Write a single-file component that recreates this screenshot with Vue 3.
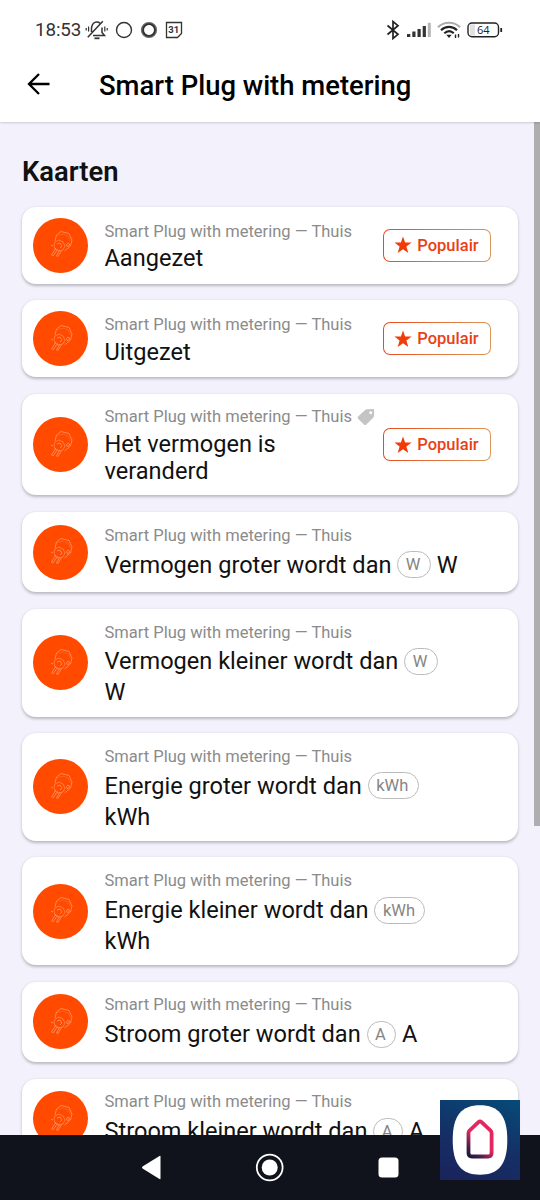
<script setup>
const device = 'Smart Plug with metering — Thuis'
const cards = [
  { title: 'Aangezet', popular: true },
  { title: 'Uitgezet', popular: true },
  { title: 'Het vermogen is veranderd', popular: true, tag: true },
  { title: 'Vermogen groter wordt dan', unit: 'W' },
  { title: 'Vermogen kleiner wordt dan', unit: 'W' },
  { title: 'Energie groter wordt dan', unit: 'kWh' },
  { title: 'Energie kleiner wordt dan', unit: 'kWh' },
  { title: 'Stroom groter wordt dan', unit: 'A' },
  { title: 'Stroom kleiner wordt dan', unit: 'A' },
]
</script>

<template>
  <div class="screen">
    <header class="top">
      <div class="status">
        <span class="clock">18:53</span>
        <svg class="bell" width="23" height="20" viewBox="0 0 23 20" fill="none" stroke="#333" stroke-width="1.5">
          <path d="M8 15.500H19.500L17 12.500V7.500M6.500 12V8C7 4.500 9 2 11.800 2q2 0 3.200 1.200M2.800 17.300 17.800 1.200" />
          <path d="M9.500 18.300h5" stroke-width="1.800" />
          <path d="M3.600 6.500v5M1.200 8v2.500M19.800 6.500v5M22.200 8v2.500" stroke-width="1.200" />
        </svg>
        <svg class="ring" width="18" height="18" viewBox="0 0 18 18" fill="none" stroke="#333">
          <circle cx="9" cy="9" r="7.500" stroke-width="1.400" />
        </svg>
        <svg class="ring" width="18" height="18" viewBox="0 0 18 18" fill="none">
          <circle cx="9" cy="9" r="6.500" stroke="#666" stroke-width="3.200" />
          <circle cx="9" cy="9" r="6" stroke="#2c2c2c" stroke-width="1.400" />
        </svg>
        <svg class="calendar" width="18" height="18" viewBox="0 0 18 18" fill="none" stroke="#333" stroke-width="1.300">
          <path d="M1.500 1.500h15v11l-4 4h-11zM16 13l-3 3" />
          <text x="8.800" y="12.200" text-anchor="middle" font-family="Roboto, sans-serif" font-size="9.500" font-weight="700" fill="#333" stroke="none">31</text>
        </svg>
        <div class="status-right">
          <svg width="14" height="20" viewBox="0 0 14 20" fill="none" stroke="#222" stroke-width="1.700">
            <path d="M1.500 5.500 12 14.300 7 18.500V1.500L12 5.700 1.500 14.500" />
          </svg>
          <svg class="signal" width="26" height="16" viewBox="0 0 26 16">
            <path fill="#333" d="M1 12h3.300v3H1zM6.300 9.500h3.200V15H6.300zM11.500 7h3.200v8h-3.200zM16.700 4h3.200v11h-3.200z" />
            <path fill="#b5b5b5" d="M21.800 .8h3V15h-3z" />
          </svg>
          <svg class="wifi" width="24" height="18" viewBox="0 0 24 18" fill="none" stroke="#222" stroke-width="2.100">
            <path d="M1 6.200C7 .2 17 .2 23 6.200" stroke="#aaa" />
            <path d="M4 9.200c4.500-4.500 11.500-4.500 16 0" />
            <path d="M7.300 12.300c3-2.700 6.700-2.700 9.500 0" />
            <path d="M9.300 13.800h5.400L12 17z" fill="#222" stroke="none" />
            <path d="M18.500 13.500V17M21.500 13v3.500" stroke-width="1.400" />
          </svg>
          <svg class="battery" width="36" height="16" viewBox="0 0 36 16" fill="none" stroke="#222" stroke-width="1.400">
            <rect x="3" y="2.500" width="5" height="11" fill="#e2e2e2" stroke="none" />
            <rect x="1" y="1" width="30.500" height="13.800" rx="4" />
            <path d="M34.200 6v4" stroke-width="1.800" />
            <text x="16.200" y="12" text-anchor="middle" font-family="'Open Sans', sans-serif" font-size="11" font-weight="500" fill="#222" stroke="none">64</text>
          </svg>
        </div>
      </div>
      <div class="bar">
        <svg class="back" width="24" height="24" viewBox="0 0 24 24" fill="none" stroke="#000" stroke-width="2.300">
          <path d="M13 2 3 12l10 10M3 12H23.500" />
        </svg>
        <h1>Smart Plug with metering</h1>
      </div>
    </header>

    <main class="content">
      <div class="list">
        <h2>Kaarten</h2>
        <article v-for="card in cards" :key="card.title" class="card">
          <div class="avatar">
            <svg width="28" height="32" viewBox="0 0 28 32" fill="none" stroke="#ffa57a" stroke-width=".8" stroke-linejoin="round">
              <path d="M8 12 9.500 6l4.500-3.500 8 2 3 6.500-1.500 6-6 5" opacity=".85" />
              <path d="M9.500 6.500 17 5l5 3 1.500 4" opacity=".35" />
              <path d="M8 13l4-2 4 2 2 4-2 4-4 1-4-2-1-4z" opacity=".7" />
              <path d="M10 15l3-1 2 3-2 2M6 17l-2-1M9 19 4.500 26l1.500 1 4.500-6.500M12.500 21 9.500 27l1.500 .5 3.500-6M19.500 15.500l1.500-1.500 1.500 1-.5 2-2 .5z" opacity=".85" />
            </svg>
          </div>
          <div class="body">
            <div class="meta">
              {{ device }}
              <svg v-if="card.tag" class="tag" width="18" height="18" viewBox="0 0 18 18">
                <path fill="#c4c4c4" fill-rule="evenodd" d="M10 1.200 16 1q1.200 0 1.200 1.200L17 8q0 .8-.6 1.400l-7 7q-1.200 1.100-2.400 0L1.100 10.800Q0 9.600 1.100 8.400l7.300-6.700Q9 1.200 10 1.200zM13.700 3.300a1.500 1.500 0 1 0 .01 0z" />
              </svg>
            </div>
            <div class="title">
              {{ card.title }}<template v-if="card.unit">{{ ' ' }}<span class="pill">{{ card.unit }}</span>{{ ' ' + card.unit }}</template>
            </div>
          </div>
          <div v-if="card.popular" class="badge">
            <svg width="18" height="18" viewBox="0 0 18 18">
              <path fill="#f23c08" d="m9 .5 2.100 6H17.600l-5.200 4 1.900 6.500L9 13.200 3.700 17l1.900-6.500L.4 6.500h6.500z" />
            </svg>
            Populair
          </div>
        </article>
      </div>
      <div class="scrollbar"></div>
    </main>

    <nav class="nav">
      <svg width="540" height="65" viewBox="0 0 540 65" fill="#fff">
        <path d="M160.500 21.500v22q0 1-1 .5L142.500 33.500q-1-1 0-2L159.500 21q1-.5 1 .5z" />
        <circle cx="269.700" cy="32.500" r="12.900" fill="none" stroke="#fff" stroke-width="1.800" />
        <circle cx="269.700" cy="32.500" r="8" />
        <rect x="378.500" y="22.500" width="20" height="20" rx="3.500" />
      </svg>
    </nav>

    <div class="app-logo">
      <svg width="80" height="80" viewBox="0 0 80 80" fill="none">
        <defs>
          <linearGradient id="house" x1="28" y1="58" x2="42" y2="42" gradientUnits="userSpaceOnUse">
            <stop offset="0" stop-color="#151a3a" />
            <stop offset=".35" stop-color="#3b1c46" />
            <stop offset="1" stop-color="#e5275f" />
          </linearGradient>
        </defs>
        <path fill="#fff" d="M40 5.300C58 5.300 67.300 15 67.300 40S58 74.700 40 74.700 12.700 65 12.700 40 22 5.300 40 5.300z" />
        <path stroke="url(#house)" stroke-width="3.800" stroke-linejoin="round" d="M38.200 22.300q1.800-1.600 3.600 0l8.800 8.300q1 1 1 2.600V53q0 3.500-3.500 3.500H32q-3.500 0-3.500-3.500V33.200q0-1.600 1-2.600z" />
      </svg>
    </div>
  </div>
</template>

<style>
body { background: #f3f2fb; }
</style>

<style scoped>
.screen {
  position: relative;
  width: 540px;
  height: 1200px;
  overflow: hidden;
  display: flex;
  flex-direction: column;
  background: #f3f2fc;
  font-family: Roboto, sans-serif;
  color: #111;
}
svg { display: block; flex: none; }
.top {
  height: 122px;
  flex: none;
  background: #fff;
  box-shadow: 0 1px 2px rgba(0, 0, 0, .16);
  z-index: 1;
}
.status {
  height: 60px;
  padding: 0 37px 0 35px;
  display: flex;
  align-items: center;
  box-sizing: border-box;
}
.clock { font-size: 18.800px; letter-spacing: -.1px; width: 50px; color: #333; }
.ring { margin-left: 7px; }
.calendar { margin-left: 7px; }
.status-right { display: flex; align-items: center; margin-left: auto; }
.signal { margin-left: 6px; }
.wifi { margin-left: 5px; }
.battery { margin-left: 6px; }
.bar { display: flex; align-items: center; height: 50px; padding-left: 26px; }
.back { margin-top: -2px; }
h1 { margin: 2px 0 0 49px; font-size: 27.450px; font-weight: 500; line-height: 50px; white-space: nowrap; color: #000; }
.content { flex: 1; min-height: 0; display: flex; overflow: hidden; justify-content: space-between; }
.list { display: flex; flex-direction: column; gap: 16.600px; width: 496px; margin-left: 22px; }
h2 { margin: 34px 0 2.200px; font-size: 27.400px; line-height: 32px; font-weight: 600; }
.card {
  flex: none;
  display: flex;
  align-items: center;
  box-sizing: border-box;
  min-height: 76.800px;
  padding: 0 27.500px 0 11px;
  border-radius: 14px;
  background: #fff;
  box-shadow: 0 1.500px 3px rgba(0, 0, 0, .24);
}
.avatar {
  flex: none;
  width: 55px;
  height: 55px;
  border-radius: 50%;
  background: #ff4a00;
  display: grid;
  place-items: center;
}
.body { flex: 0 0 358px; margin-left: 16.500px; padding: 13.200px 0 9.850px; }
.card:has(.badge) .body { flex-basis: 270px; }
.meta { display: flex; align-items: center; gap: 5px; height: 20px; margin-bottom: 4.300px; font-size: 16.520px; white-space: nowrap; color: #8b8b8b; }
.title { font-size: 23.570px; line-height: 27.300px; }
.pill {
  display: inline-flex;
  align-items: center;
  box-sizing: border-box;
  height: 27px;
  margin: 1.700px 0 4.300px;
  padding: 0 9.300px 0 7.500px;
  border: 1px solid #bbb;
  border-radius: 14px;
  font-size: 16.500px;
  line-height: 25px;
  vertical-align: middle;
  color: #858585;
}
.badge {
  flex: none;
  display: flex;
  align-items: center;
  justify-content: center;
  gap: 5px;
  box-sizing: border-box;
  width: 108px;
  height: 33px;
  margin-left: auto;
  border: 1.500px solid transparent;
  border-radius: 7px;
  background: linear-gradient(#fff, #fff) padding-box, linear-gradient(100deg, #e84a1c, #d99a5c) border-box;
  font-size: 16.500px;
  font-weight: 500;
  color: #e93f15;
}
.scrollbar { width: 6px; height: 704px; background: #aeaeb1; }
.nav { flex: none; height: 65px; background: #10131b; }
.app-logo {
  position: absolute;
  left: 440px;
  top: 1100px;
  width: 80px;
  height: 80px;
  background: linear-gradient(200deg, #064b78, #152f65 55%, #1b235c);
}
</style>
